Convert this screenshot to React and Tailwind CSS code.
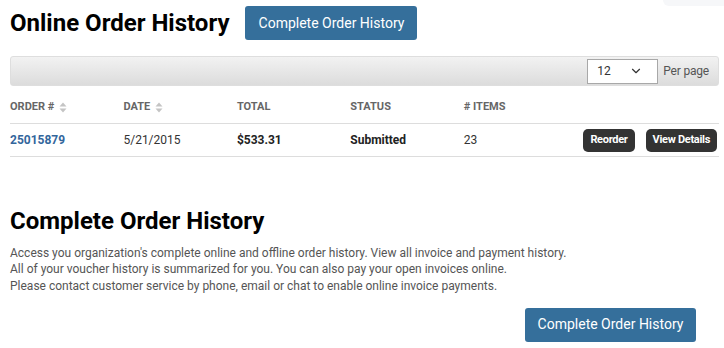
import React from 'react';
import { ChevronDown } from 'lucide-react';

const SortIcon = () => (
  <svg width="8" height="11" viewBox="0 0 8 11" className="ml-[5px]">
    <path d="M4 0.5 L7.5 4.5 L0.5 4.5 Z" fill="#c4c4c4" />
    <path d="M4 10.5 L7.5 6.5 L0.5 6.5 Z" fill="#c4c4c4" />
  </svg>
);

const orders = [
  { id: '25015879', date: '5/21/2015', total: '$533.31', status: 'Submitted', items: '23' },
];

const App = () => {
  return (
    <div className="relative w-[724px] h-[348px] bg-white overflow-hidden font-['Roboto',sans-serif] text-[#222]">
      {/* faint tab peeking in at the top right */}
      <div className="absolute top-0 right-0 w-[61px] h-[6px] bg-[#f6f7f9] rounded-bl-[6px]"></div>

      {/* Header */}
      <div className="flex items-center pl-[10px] pt-[6px] gap-[16px]">
        <h1 className="text-[24px] leading-[34px] font-bold text-black">Online Order History</h1>
        <button className="h-[34px] w-[172px] bg-[#356f9b] text-white text-[14px] rounded-[3px]">
          Complete Order History
        </button>
      </div>

      {/* Pager bar */}
      <div className="ml-[10px] w-[709px] mt-[16px] h-[30px] rounded-[3px] border border-[#dedede] bg-gradient-to-b from-[#f2f2f2] to-[#dcdcdc] flex items-center justify-end">
        <div className="h-[25px] w-[71px] bg-white border border-[#a8a8a8] flex items-center justify-between pl-[9px] pr-[14px] text-[12px] text-[#333]">
          <span>12</span>
          <ChevronDown className="w-[14px] h-[14px] text-[#333]" strokeWidth={2} />
        </div>
        <span className="ml-[5px] mr-[9px] text-[12px] tracking-[-0.2px] text-[#555]">Per page</span>
      </div>

      {/* Table */}
      <div className="ml-[10px] w-[709px]">
        <div className="flex items-center h-[38px] pt-[5px] border-b border-[#dddddd] text-[11px] font-bold uppercase text-[#666]">
          <div className="w-[16%] flex items-center">Order #<SortIcon /></div>
          <div className="w-[16%] flex items-center">Date<SortIcon /></div>
          <div className="w-[16%]">Total</div>
          <div className="w-[16%]">Status</div>
          <div className="w-[16%]"># Items</div>
          <div className="w-[20%]"></div>
        </div>
        {orders.map((o) => (
          <div key={o.id} className="flex items-center h-[33px] border-b border-[#dddddd] text-[12px] text-[#333]">
            <div className="w-[16%] font-bold text-[#33669c]">{o.id}</div>
            <div className="w-[16%]">{o.date}</div>
            <div className="w-[16%] font-bold text-[#222]">{o.total}</div>
            <div className="w-[16%] font-bold text-[#222]">{o.status}</div>
            <div className="w-[16%]">{o.items}</div>
            <div className="w-[20%] flex justify-end gap-[11px] pr-[2px]">
              <button className="h-[23px] px-[7px] rounded-[5px] bg-[#333] text-white text-[11px] tracking-[-0.3px] font-bold whitespace-nowrap">Reorder</button>
              <button className="h-[23px] px-[7px] rounded-[5px] bg-[#333] text-white text-[11px] tracking-[-0.3px] font-bold whitespace-nowrap">View Details</button>
            </div>
          </div>
        ))}
      </div>

      {/* Complete history section */}
      <div className="pl-[10px] mt-[49px]">
        <h2 className="text-[24px] leading-[30px] font-bold text-black">Complete Order History</h2>
        <p className="mt-[9px] text-[12px] leading-[16.3px] text-[#555]">
          Access you organization's complete online and offline order history. View all invoice and payment history.
          <br />
          All of your voucher history is summarized for you. You can also pay your open invoices online.
          <br />
          Please contact customer service by phone, email or chat to enable online invoice payments.
        </p>
      </div>
      <div className="flex justify-end pr-[28px] mt-[14px]">
        <button className="h-[34px] w-[171px] bg-[#356f9b] text-white text-[14px] rounded-[3px]">
          Complete Order History
        </button>
      </div>
    </div>
  );
};

export default App;
